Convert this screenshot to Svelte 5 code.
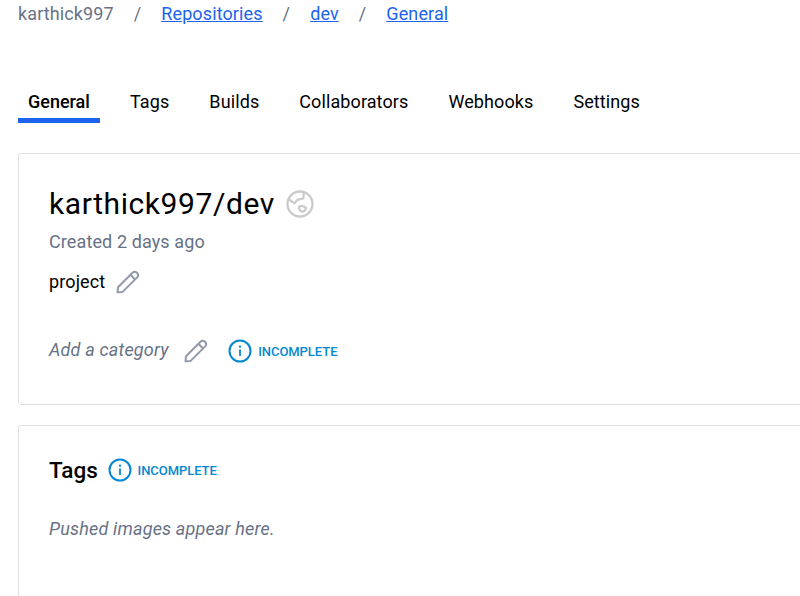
<script>
  const crumbs = ['Repositories', 'dev', 'General'];
  const tabs = ['General', 'Tags', 'Builds', 'Collaborators', 'Webhooks', 'Settings'];
</script>

{#snippet pencil()}
  <svg class="pencil" width="24" height="24" viewBox="0 0 24 24" fill="none" stroke="#9299ab" stroke-width="2" stroke-linejoin="round">
    <path d="M1.5 22.3 L2 17.2 L16.5 2.7 Q18.7 .7 21 2.8 Q23.2 5.2 21.2 7.4 L6.6 21.9 Z" />
    <path d="M14.4 4.8 L19.1 9.5" />
  </svg>
{/snippet}

{#snippet incomplete()}
  <span class="badge">
    <svg width="24" height="24" viewBox="0 0 24 24">
      <circle cx="12" cy="12" r="10.5" fill="none" stroke="#0388d1" stroke-width="2" />
      <circle cx="12" cy="7.7" r="1.15" fill="#0388d1" />
      <path d="M12 11.2V16.2" stroke="#0388d1" stroke-width="1.8" stroke-linecap="round" />
    </svg>
    <span>INCOMPLETE</span>
  </span>
{/snippet}

<main>
  <nav class="crumbs">
    <span>karthick997</span>
    {#each crumbs as crumb}
      <span class="slash">/</span>
      <a href="#top">{crumb}</a>
    {/each}
  </nav>

  <nav class="tabs">
    {#each tabs as tab, i}
      <div class="tab" class:active={i === 0}>{tab}</div>
    {/each}
  </nav>

  <section class="card overview">
    <div class="title">
      <h1>karthick997/dev</h1>
      <svg width="30" height="30" viewBox="0 0 30 30" fill="none" stroke="#cbcbcb" stroke-width="2.3" stroke-linejoin="round">
        <circle cx="15" cy="15" r="12.5" />
        <path d="M3.5 10.3 L9.6 14.2 L12.5 10.8 L18.4 9.4 L18.8 3.2" />
        <path d="M14.2 17.4 Q17 15.8 21 18.9 Q20.5 22 17.1 22.8 Q13.8 22 14.2 17.4 Z" />
      </svg>
    </div>
    <p class="created">Created 2 days ago</p>
    <div class="description"><span>project</span>{@render pencil()}</div>
    <div class="category"><em>Add a category</em>{@render pencil()}{@render incomplete()}</div>
  </section>

  <section class="card tags">
    <div class="heading"><h2>Tags</h2>{@render incomplete()}</div>
    <p class="empty">Pushed images appear here.</p>
  </section>
</main>

<style>
  :global(body) { background: #fff; overflow: hidden; }
  main {
    box-sizing: border-box;
    height: 596px;
    padding-left: 18px;
    overflow: hidden;
    font: 18px/24px Roboto, sans-serif;
    letter-spacing: 0.11px;
    color: #000;
  }
  h1, h2, p { margin: 0; }
  .crumbs { display: flex; height: 24px; margin-top: 2px; color: #677285; white-space: nowrap; }
  .slash { margin: 0 20px; }
  .crumbs a { color: #1d63ed; text-decoration: underline; }
  .tabs { display: flex; gap: 20px; height: 33px; margin-top: 64px; }
  .tab { box-sizing: border-box; height: 33px; padding: 0 10px; border-bottom: 5px solid transparent; letter-spacing: 0.1px; }
  .active { width: 82px; border-color: #1d63ed; font-weight: 500; letter-spacing: 0; }
  .card { box-sizing: border-box; width: 820px; padding-left: 30px; border: 1px solid #e0e0e0; border-radius: 3px; }
  .overview { height: 252px; margin-top: 30px; padding-top: 30px; }
  .title { display: flex; align-items: center; height: 40px; gap: 10px; }
  h1 { font-size: 30px; line-height: 40px; font-weight: 400; letter-spacing: 0.58px; }
  .created { margin-top: 6px; color: #677285; }
  .description { display: flex; align-items: center; gap: 11px; height: 24px; margin-top: 16px; }
  .category { display: flex; align-items: center; height: 24px; margin-top: 45px; }
  .category em { color: #677285; letter-spacing: 0.18px; position: relative; top: -1px; }
  .category .pencil { margin: 0 20px 0 15.5px; }
  .badge { display: flex; align-items: center; gap: 6px; color: #0388d1; font-size: 13px; font-weight: 500; letter-spacing: -0.05px; }
  .badge span { position: relative; top: 1px; }
  svg { flex: none; display: block; }
  .tags { height: 220px; margin-top: 20px; padding-top: 28px; }
  .heading { display: flex; align-items: center; height: 32px; gap: 9.6px; }
  h2 { font-size: 22.5px; line-height: 32px; font-weight: 500; letter-spacing: 0.05px; }
  .empty { margin-top: 31px; color: #677285; font-style: italic; letter-spacing: 0.18px; }
</style>
